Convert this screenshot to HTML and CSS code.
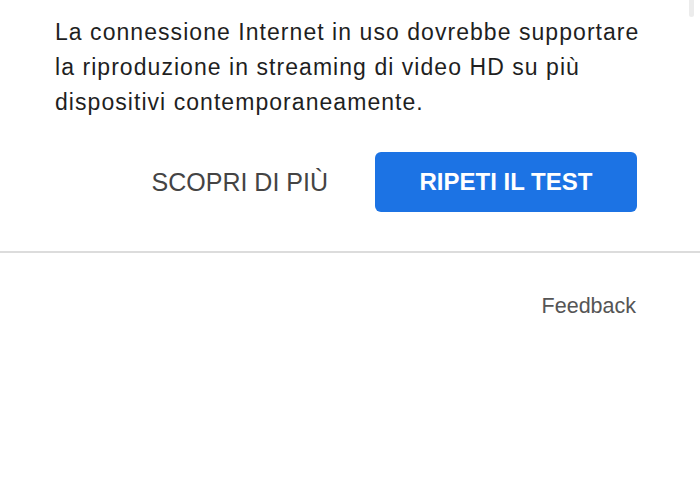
FILE: index.html
```html
<!DOCTYPE html>
<html lang="it">
<head>
<meta charset="utf-8">
<title>Test velocità</title>
<link rel="stylesheet" href="styles.css">
</head>
<body>
<div class="scrollbar"></div>
<section class="card">
  <p class="message">La connessione Internet in uso dovrebbe supportare la riproduzione in streaming di video HD su più dispositivi contemporaneamente.</p>
  <div class="actions">
    <button class="btn-text">SCOPRI DI PIÙ</button>
    <button class="btn-primary">RIPETI IL TEST</button>
  </div>
</section>
<footer class="footer">
  <a class="feedback" href="#">Feedback</a>
</footer>
</body>
</html>
```
FILE: styles.css
```css
html, body {
  margin: 0;
  padding: 0;
  background: #ffffff;
  font-family: "Liberation Sans", Arial, sans-serif;
}
.scrollbar {
  position: absolute;
  top: 0;
  left: 689px;
  width: 5px;
  height: 17px;
  background: #ececec;
  border-radius: 0 0 3px 3px;
}
.card {
  padding: 15px 58px 39px 55px;
  border-bottom: 2px solid #dcdcdc;
}
.message {
  margin: 0;
  font-size: 23px;
  line-height: 35px;
  letter-spacing: 1.05px;
  color: #1f1f1f;
}
.actions {
  display: flex;
  justify-content: flex-end;
  align-items: center;
  gap: 47px;
  margin: 32px 5px 0 0;
}
.btn-text {
  border: none;
  background: none;
  padding: 0;
  font-family: inherit;
  font-size: 25px;
  color: #444444;
}
.btn-primary {
  border: none;
  width: 262px;
  height: 60px;
  border-radius: 6px;
  background: #1c73e4;
  color: #ffffff;
  font-family: inherit;
  font-size: 24px;
  font-weight: bold;
}
.footer {
  display: flex;
  justify-content: flex-end;
  padding: 41px 64px 0 0;
}
.feedback {
  font-size: 21.5px;
  color: #555555;
  text-decoration: none;
}
```
